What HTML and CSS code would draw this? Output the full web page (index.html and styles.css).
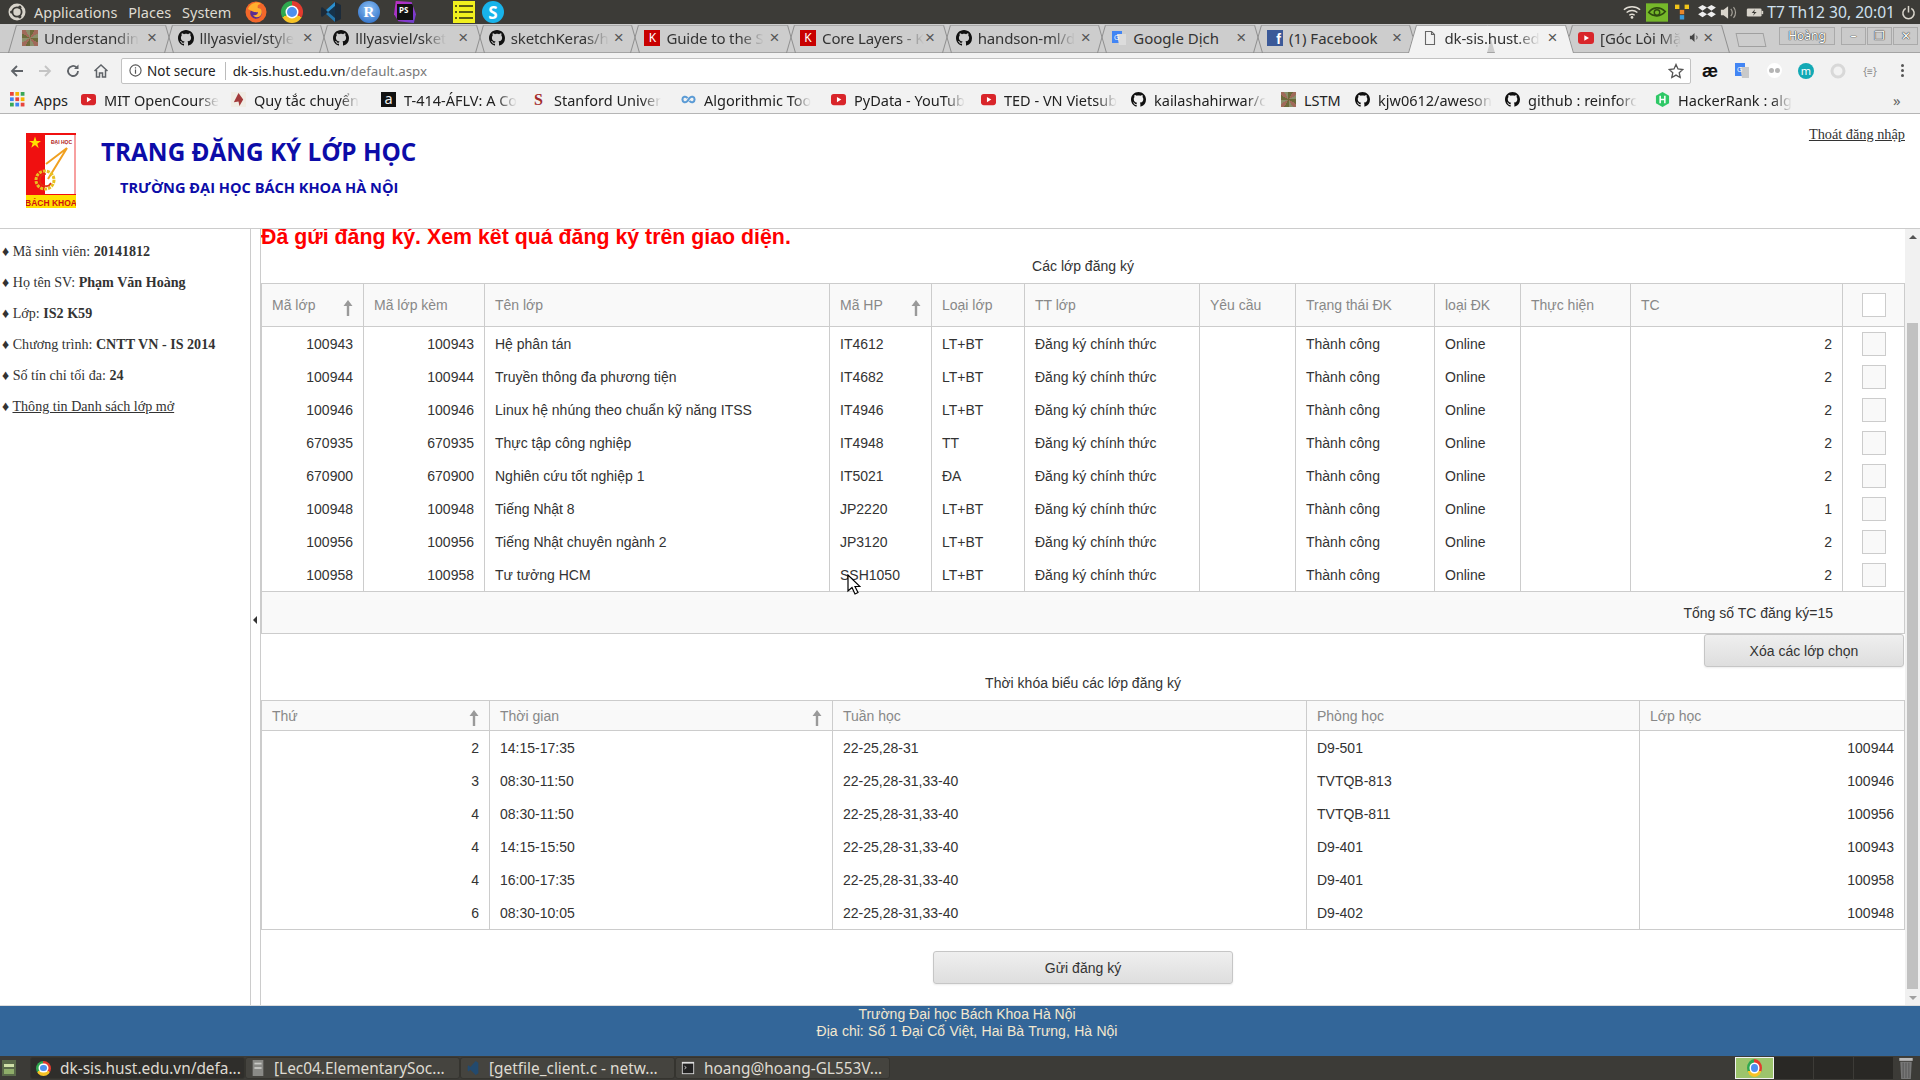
FILE: index.html
```html
<!DOCTYPE html>
<html lang="vi">
<head>
    <meta charset="UTF-8">
    <title>dk-sis.hust.edu.vn/default.aspx</title>
    <link rel="stylesheet" href="styles.css">
</head>
<body>
    <svg class="icon-defs">
        <symbol id="gh" viewBox="0 0 16 16"><path d="M8 0C3.58 0 0 3.58 0 8c0 3.54 2.29 6.53 5.47 7.59.4.07.55-.17.55-.38 0-.19-.01-.82-.01-1.49-2.01.37-2.53-.49-2.69-.94-.09-.23-.48-.94-.82-1.13-.28-.15-.68-.52-.01-.53.63-.01 1.08.58 1.23.82.72 1.21 1.87.87 2.33.66.07-.52.28-.87.51-1.07-1.78-.2-3.64-.89-3.64-3.95 0-.87.31-1.59.82-2.15-.08-.2-.36-1.02.08-2.12 0 0 .67-.21 2.2.82.64-.18 1.32-.27 2-.27s1.36.09 2 .27c1.53-1.04 2.2-.82 2.2-.82.44 1.1.16 1.92.08 2.12.51.56.82 1.27.82 2.15 0 3.07-1.87 3.75-3.65 3.95.29.25.54.73.54 1.48 0 1.07-.01 1.93-.01 2.2 0 .21.15.46.55.38A8.01 8.01 0 0 0 16 8c0-4.42-3.58-8-8-8z"/></symbol>
        <symbol id="yt" viewBox="0 0 16 16"><rect y="2" width="16" height="12" rx="3" fill="#d9252a"/><path d="M6.3 5.2v5.6L11 8z" fill="#fff"/></symbol>
        <symbol id="sortup" viewBox="0 0 10 16"><path d="M5 0l4.5 6H6.2v10H3.8V6H.5z" fill="#9a9a9a"/></symbol>
    </svg>

    <!-- ubuntu top panel -->
    <div class="panel">
        <div class="panel-left">
            <svg class="ubuntu-logo" viewBox="0 0 18 18"><circle cx="9" cy="9" r="8.5" fill="#d8d4cb"/><circle cx="9" cy="9" r="4.6" fill="none" stroke="#3c3b37" stroke-width="1.8"/><circle cx="3.6" cy="9" r="1.6" fill="#3c3b37"/><circle cx="11.8" cy="4.2" r="1.6" fill="#3c3b37"/><circle cx="11.8" cy="13.8" r="1.6" fill="#3c3b37"/></svg>
            <span class="panel-menu">Applications</span>
            <span class="panel-menu">Places</span>
            <span class="panel-menu">System</span>
        </div>
        <div class="launchers">
            <svg class="launcher" viewBox="0 0 22 22"><circle cx="11" cy="11" r="10.5" fill="#f2672a"/><circle cx="11" cy="12" r="5.8" fill="#5a2d91"/><path d="M3 8c2-6 9-8 13-5-3 0-4 2-3 4 3 0 5 3 3 7-2 3-6 3-8 0 3 1 5-1 5-3-3 1-6-1-10-3z" fill="#ffb02e"/></svg>
            <span class="chrome-icon launcher-chrome"></span>
            <svg class="launcher launcher-vscode" viewBox="0 0 22 22"><path d="M15 1l6 3v14l-6 3-9-8-4 3-1-1V7l1-1 4 3z" fill="#1c2b3a"/><path d="M15 5v12l-7-6z" fill="#16324a"/><path d="M15 1l-9 8 2 2 7-6z" fill="#2a8fd0"/><path d="M15 21l-9-8 2-2 7 6z" fill="#2477ae"/></svg>
            <span class="r-icon">R</span>
            <span class="ps-icon"><span class="ps-text">PS</span></span>
            <svg class="launcher launcher-sticky" viewBox="0 0 22 22"><rect width="22" height="22" fill="#f1f01e"/><path d="M2 5h2M6 5h14M2 11h2M6 11h14M2 17h2M6 17h14" stroke="#2a2a10" stroke-width="1.6"/></svg>
            <span class="skype-icon">S</span>
        </div>
        <div class="tray">
            <svg class="tray-wifi" viewBox="0 0 20 16"><path d="M1 5c5-4.500 13-4.500 18 0M4 8c3.500-3 8.500-3 12 0M7 11c2-1.500 4-1.500 6 0" fill="none" stroke="#e3dfd6" stroke-width="1.500"/><circle cx="10" cy="13.500" r="1.500" fill="#e3dfd6"/></svg>
            <svg class="tray-nvidia" viewBox="0 0 24 20"><rect width="24" height="20" fill="#76b82a"/><path d="M3 10c4-6 12-7 18-1-5 6-13 6-18 1z" fill="none" stroke="#2f4a10" stroke-width="1.800"/><circle cx="12" cy="10" r="3" fill="none" stroke="#2f4a10" stroke-width="1.500"/></svg>
            <svg class="tray-yellow" viewBox="0 0 16 18"><rect width="5" height="5" fill="#f0c41a"/><rect x="11" width="5" height="5" fill="#f0c41a"/><rect x="5.500" y="6" width="5" height="5" fill="#e8862a"/><rect x="5.500" y="12" width="5" height="5" fill="#3a9ad9"/></svg>
            <svg class="tray-dropbox" viewBox="0 0 20 18"><path d="M5 1l5 3-5 3.500L0 4zM15 1l5 3-5 3.500L10 4zM5 8.500l5 3-5 3.500-5-3.500zM15 8.500l5 3-5 3.500-5-3.500z" fill="#eee"/></svg>
            <svg class="tray-volume" viewBox="0 0 20 16"><path d="M1 5h3l5-4v14l-5-4H1z" fill="#d8d4cb"/><path d="M12 4c2 2.500 2 5.500 0 8M15 2c3 3.500 3 8.500 0 12" fill="none" stroke="#a8a49c" stroke-width="1.300"/></svg>
            <svg class="tray-battery" viewBox="0 0 22 12"><rect x="1" y="1" width="18" height="10" rx="1.500" fill="#d8d4cb"/><rect x="19" y="4" width="2" height="4" fill="#d8d4cb"/><path d="M11 2L7 6.500h3L8.500 10 13 5.500h-3z" fill="#3c3b37"/></svg>
            <span class="tray-clock">T7 Th12 30, 20:01</span>
            <svg class="tray-power" viewBox="0 0 16 16"><path d="M5 3.500a6 6 0 1 0 6 0" fill="none" stroke="#d8d4cb" stroke-width="1.600"/><path d="M8 1v7" stroke="#d8d4cb" stroke-width="1.600"/></svg>
        </div>
    </div>

    <!-- browser tabs -->
    <div class="tabstrip">
        <div class="tab"><span class="fav fav-photo"></span><span class="tab-title">Understandin</span><span class="tab-close">×</span></div>
        <div class="tab"><svg class="fav"><use href="#gh"/></svg><span class="tab-title">lllyasviel/style</span><span class="tab-close">×</span></div>
        <div class="tab"><svg class="fav"><use href="#gh"/></svg><span class="tab-title">lllyasviel/sket</span><span class="tab-close">×</span></div>
        <div class="tab"><svg class="fav"><use href="#gh"/></svg><span class="tab-title">sketchKeras/h</span><span class="tab-close">×</span></div>
        <div class="tab"><span class="fav fav-k">K</span><span class="tab-title">Guide to the S</span><span class="tab-close">×</span></div>
        <div class="tab"><span class="fav fav-k">K</span><span class="tab-title">Core Layers - K</span><span class="tab-close">×</span></div>
        <div class="tab"><svg class="fav"><use href="#gh"/></svg><span class="tab-title">handson-ml/d</span><span class="tab-close">×</span></div>
        <div class="tab"><svg class="fav fav-translate" viewBox="0 0 16 16"><rect x="1" y="1" width="10" height="12" fill="#4285f4"/><path d="M6 4h9v11H8z" fill="#dcdcdc"/><text x="3" y="10" font-size="7" fill="#fff" font-family="Liberation Sans">G</text></svg><span class="tab-title tab-title-full">Google Dịch</span><span class="tab-close">×</span></div>
        <div class="tab"><span class="fav fav-fb">f</span><span class="tab-title tab-title-full">(1) Facebook</span><span class="tab-close">×</span></div>
        <div class="tab tab-active"><svg class="fav" viewBox="0 0 16 16"><path d="M3.500 1.500h6l3 3v10h-9zM9.500 1.500v3h3" fill="none" stroke="#666" stroke-width="1.100"/></svg><span class="tab-title">dk-sis.hust.ed</span><span class="tab-close">×</span></div>
        <div class="tab"><svg class="fav"><use href="#yt"/></svg><span class="tab-title">[Góc Lòi Mặ</span><svg class="tab-sound" viewBox="0 0 12 12"><path d="M1 4h2l3-3v10L3 8H1z" fill="#444"/><path d="M8 4c1 1.300 1 2.700 0 4" fill="none" stroke="#444"/></svg><span class="tab-close tab-close-near">×</span></div>
        <div class="new-tab"></div>
        <div class="window-controls">
            <span class="profile-btn">Hoàng</span>
            <span class="win-btn">–</span>
            <span class="win-btn">❐</span>
            <span class="win-btn">✕</span>
        </div>
    </div>

    <!-- address bar -->
    <div class="toolbar">
        <div class="nav-buttons">
            <svg class="nav-icon" viewBox="0 0 16 16"><path d="M14 8H3M8 3L3 8l5 5" fill="none" stroke="#5f6368" stroke-width="1.800"/></svg>
            <svg class="nav-icon" viewBox="0 0 16 16"><path d="M2 8h11M8 3l5 5-5 5" fill="none" stroke="#c4c4c4" stroke-width="1.800"/></svg>
            <svg class="nav-icon" viewBox="0 0 16 16"><path d="M13 8a5 5 0 1 1-1.500-3.600" fill="none" stroke="#5f6368" stroke-width="1.800"/><path d="M13.500 1.500v4.500H9z" fill="#5f6368"/></svg>
            <svg class="nav-icon" viewBox="0 0 16 16"><path d="M1.500 8L8 2l6.500 6M3.500 7v7h3v-4h3v4h3V7" fill="none" stroke="#5f6368" stroke-width="1.500"/></svg>
        </div>
        <div class="omnibox">
            <svg class="info-icon" viewBox="0 0 14 14"><circle cx="7" cy="7" r="6" fill="none" stroke="#555" stroke-width="1.200"/><path d="M7 6v4.500M7 3.500v1.300" stroke="#555" stroke-width="1.300"/></svg>
            <span class="omni-secure">Not secure</span>
            <span class="omni-sep"></span>
            <span class="omni-url">dk-sis.hust.edu.vn<span class="omni-path">/default.aspx</span></span>
            <svg class="star-icon" viewBox="0 0 16 16"><path d="M8 1.500l2 4.500 4.800.5-3.600 3.200 1 4.800L8 12.100l-4.200 2.400 1-4.800L1.200 6.500 6 6z" fill="none" stroke="#555" stroke-width="1.300"/></svg>
        </div>
        <div class="extensions">
            <span class="ext-ae">æ</span>
            <svg class="ext" viewBox="0 0 16 16"><rect x="1" y="0" width="10" height="13" fill="#4285f4"/><path d="M6 4h9v11H8z" fill="#c9c9c9"/><text x="3" y="9" font-size="7" fill="#fff" font-family="Liberation Sans">G</text></svg>
            <span class="ext-dots"><span class="ext-dot"></span><span class="ext-dot"></span></span>
            <span class="ext-m">m</span>
            <svg class="ext" viewBox="0 0 16 16"><circle cx="8" cy="8" r="6" fill="none" stroke="#d8d8d8" stroke-width="3"/></svg>
            <span class="ext-json">{≡}</span>
            <span class="ext-menu"><span class="ext-menu-dot"></span><span class="ext-menu-dot"></span><span class="ext-menu-dot"></span></span>
        </div>
    </div>

    <!-- bookmarks -->
    <div class="bookmarks">
        <div class="bm-apps">
            <svg class="bm-icon" viewBox="0 0 14 14"><g><rect width="3.500" height="3.500" fill="#e8453c"/><rect x="5" width="3.500" height="3.500" fill="#f5b400"/><rect x="10" width="3.500" height="3.500" fill="#3aa757"/><rect y="5" width="3.500" height="3.500" fill="#4285f4"/><rect x="5" y="5" width="3.500" height="3.500" fill="#e8453c"/><rect x="10" y="5" width="3.500" height="3.500" fill="#f5b400"/><rect y="10" width="3.500" height="3.500" fill="#3aa757"/><rect x="5" y="10" width="3.500" height="3.500" fill="#4285f4"/><rect x="10" y="10" width="3.500" height="3.500" fill="#e8453c"/></g></svg>
            <span>Apps</span>
        </div>
        <div class="bm"><svg class="bm-icon"><use href="#yt"/></svg><span class="bm-text">MIT OpenCourse</span></div>
        <div class="bm"><svg class="bm-icon" viewBox="0 0 16 16"><rect width="16" height="16" fill="#f0ece4"/><path d="M8 1l5 7-4 7-1-5-5 1z" fill="#a33a3a"/></svg><span class="bm-text">Quy tắc chuyển</span></div>
        <div class="bm"><span class="bm-icon bm-a">a</span><span class="bm-text">T-414-ÁFLV: A Co</span></div>
        <div class="bm"><span class="bm-icon bm-s">S</span><span class="bm-text">Stanford Univer</span></div>
        <div class="bm"><svg class="bm-icon" viewBox="0 0 16 16"><path d="M7 6.500C5 4 1.500 5 1.500 8s3.500 4 5.500 1.500l2-3C11 4 14.500 5 14.500 8S11 12 9 9.500" fill="none" stroke="#5b9bd5" stroke-width="2.200"/></svg><span class="bm-text">Algorithmic Too</span></div>
        <div class="bm"><svg class="bm-icon"><use href="#yt"/></svg><span class="bm-text">PyData - YouTub</span></div>
        <div class="bm"><svg class="bm-icon"><use href="#yt"/></svg><span class="bm-text">TED - VN Vietsub</span></div>
        <div class="bm"><svg class="bm-icon"><use href="#gh"/></svg><span class="bm-text">kailashahirwar/c</span></div>
        <div class="bm bm-short"><span class="fav fav-photo bm-icon"></span><span>LSTM</span></div>
        <div class="bm"><svg class="bm-icon"><use href="#gh"/></svg><span class="bm-text">kjw0612/aweson</span></div>
        <div class="bm"><svg class="bm-icon"><use href="#gh"/></svg><span class="bm-text">github : reinforc</span></div>
        <div class="bm"><svg class="bm-icon" viewBox="0 0 16 16"><path d="M8 0l7 4v8l-7 4-7-4V4z" fill="#2ec866"/><path d="M5.500 4v8M10.500 4v8M5.500 8h5" stroke="#fff" stroke-width="1.600"/></svg><span class="bm-text">HackerRank : alg</span></div>
        <span class="bm-more">»</span>
    </div>

    <!-- page -->
    <header class="site-header">
        <svg class="school-logo" viewBox="0 0 50 75">
            <rect width="50" height="75" fill="#f01010"/>
            <rect x="19" y="2" width="29" height="59" fill="#fff"/>
            <rect x="48" y="2" width="2" height="59" fill="#f7a0a0"/>
            <path d="M9 3.500l1.500 4.500h4.500l-3.700 2.700 1.400 4.500L9 12l-3.700 2.700 1.400-4.500L3 8h4.500z" fill="#ffe000"/>
            <text class="logo-top" x="25" y="10.500">ĐẠI HỌC</text>
            <path d="M41 15L20 31M41 15L22 46" stroke="#f0a020" stroke-width="2" fill="none"/>
            <circle cx="19" cy="47" r="9" fill="none" stroke="#e8c020" stroke-width="3" stroke-dasharray="3 1"/>
            <path d="M20 41a6 6 0 1 0 5 9" fill="none" stroke="#e03010" stroke-width="1.500"/>
            <rect y="61" width="50" height="14" fill="#ffe000"/>
            <rect x="0" y="61" width="50" height="1" fill="#f01010"/>
            <text class="logo-bottom" x="25" y="72.500">BÁCH KHOA</text>
        </svg>
        <div class="site-titles">
            <div class="site-title">TRANG ĐĂNG KÝ LỚP HỌC</div>
            <div class="site-subtitle">TRƯỜNG ĐẠI HỌC BÁCH KHOA HÀ NỘI</div>
        </div>
        <a class="logout" href="#">Thoát đăng nhập</a>
    </header>

    <div class="site-body">
        <aside class="sidebar">
            <div class="side-line">♦ Mã sinh viên: <b>20141812</b></div>
            <div class="side-line">♦ Họ tên SV: <b>Phạm Văn Hoàng</b></div>
            <div class="side-line">♦ Lớp: <b>IS2 K59</b></div>
            <div class="side-line">♦ Chương trình: <b>CNTT VN - IS 2014</b></div>
            <div class="side-line">♦ Số tín chỉ tối đa: <b>24</b></div>
            <div class="side-line">♦ <a href="#">Thông tin Danh sách lớp mở</a></div>
        </aside>
        <div class="splitter"><span class="splitter-arrow"></span></div>

        <main class="content">
            <div class="message">Đã gửi đăng ký. Xem kết quả đăng ký trên giao diện.</div>
            <div class="section-title">Các lớp đăng ký</div>

            <table class="grid grid-classes">
                <colgroup>
                    <col class="c102"><col class="c121"><col class="c345"><col class="c102"><col class="c93"><col class="c175">
                    <col class="c96"><col class="c139"><col class="c86"><col class="c110"><col class="c212"><col class="c62">
                </colgroup>
                <thead>
                    <tr>
                        <th><span class="th-sort">Mã lớp <svg class="sort-arrow"><use href="#sortup"/></svg></span></th>
                        <th>Mã lớp kèm</th>
                        <th>Tên lớp</th>
                        <th><span class="th-sort">Mã HP <svg class="sort-arrow"><use href="#sortup"/></svg></span></th>
                        <th>Loại lớp</th>
                        <th>TT lớp</th>
                        <th>Yêu cầu</th>
                        <th>Trạng thái ĐK</th>
                        <th>loại ĐK</th>
                        <th>Thực hiện</th>
                        <th>TC</th>
                        <th class="cell-check"><span class="check check-head"></span></th>
                    </tr>
                </thead>
                <tbody>
                    <tr><td class="num">100943</td><td class="num">100943</td><td>Hệ phân tán</td><td>IT4612</td><td>LT+BT</td><td>Đăng ký chính thức</td><td></td><td>Thành công</td><td>Online</td><td></td><td class="num">2</td><td class="cell-check"><span class="check"></span></td></tr>
                    <tr><td class="num">100944</td><td class="num">100944</td><td>Truyền thông đa phương tiện</td><td>IT4682</td><td>LT+BT</td><td>Đăng ký chính thức</td><td></td><td>Thành công</td><td>Online</td><td></td><td class="num">2</td><td class="cell-check"><span class="check"></span></td></tr>
                    <tr><td class="num">100946</td><td class="num">100946</td><td>Linux hệ nhúng theo chuẩn kỹ năng ITSS</td><td>IT4946</td><td>LT+BT</td><td>Đăng ký chính thức</td><td></td><td>Thành công</td><td>Online</td><td></td><td class="num">2</td><td class="cell-check"><span class="check"></span></td></tr>
                    <tr><td class="num">670935</td><td class="num">670935</td><td>Thực tập công nghiệp</td><td>IT4948</td><td>TT</td><td>Đăng ký chính thức</td><td></td><td>Thành công</td><td>Online</td><td></td><td class="num">2</td><td class="cell-check"><span class="check"></span></td></tr>
                    <tr><td class="num">670900</td><td class="num">670900</td><td>Nghiên cứu tốt nghiệp 1</td><td>IT5021</td><td>ĐA</td><td>Đăng ký chính thức</td><td></td><td>Thành công</td><td>Online</td><td></td><td class="num">2</td><td class="cell-check"><span class="check"></span></td></tr>
                    <tr><td class="num">100948</td><td class="num">100948</td><td>Tiếng Nhật 8</td><td>JP2220</td><td>LT+BT</td><td>Đăng ký chính thức</td><td></td><td>Thành công</td><td>Online</td><td></td><td class="num">1</td><td class="cell-check"><span class="check"></span></td></tr>
                    <tr><td class="num">100956</td><td class="num">100956</td><td>Tiếng Nhật chuyên ngành 2</td><td>JP3120</td><td>LT+BT</td><td>Đăng ký chính thức</td><td></td><td>Thành công</td><td>Online</td><td></td><td class="num">2</td><td class="cell-check"><span class="check"></span></td></tr>
                    <tr><td class="num">100958</td><td class="num">100958</td><td>Tư tưởng HCM</td><td>SSH1050</td><td>LT+BT</td><td>Đăng ký chính thức</td><td></td><td>Thành công</td><td>Online</td><td></td><td class="num">2</td><td class="cell-check"><span class="check"></span></td></tr>
                </tbody>
                <tfoot>
                    <tr><td colspan="12" class="grid-total">Tổng số TC đăng ký=15</td></tr>
                </tfoot>
            </table>

            <div class="delete-row"><button class="btn btn-delete">Xóa các lớp chọn</button></div>

            <div class="section-title section-title-second">Thời khóa biểu các lớp đăng ký</div>

            <table class="grid grid-schedule">
                <colgroup>
                    <col class="c228"><col class="c343"><col class="c474"><col class="c333"><col class="c265">
                </colgroup>
                <thead>
                    <tr>
                        <th><span class="th-sort">Thứ <svg class="sort-arrow"><use href="#sortup"/></svg></span></th>
                        <th><span class="th-sort">Thời gian <svg class="sort-arrow"><use href="#sortup"/></svg></span></th>
                        <th>Tuần học</th>
                        <th>Phòng học</th>
                        <th>Lớp học</th>
                    </tr>
                </thead>
                <tbody>
                    <tr><td class="num">2</td><td>14:15-17:35</td><td>22-25,28-31</td><td>D9-501</td><td class="num">100944</td></tr>
                    <tr><td class="num">3</td><td>08:30-11:50</td><td>22-25,28-31,33-40</td><td>TVTQB-813</td><td class="num">100946</td></tr>
                    <tr><td class="num">4</td><td>08:30-11:50</td><td>22-25,28-31,33-40</td><td>TVTQB-811</td><td class="num">100956</td></tr>
                    <tr><td class="num">4</td><td>14:15-15:50</td><td>22-25,28-31,33-40</td><td>D9-401</td><td class="num">100943</td></tr>
                    <tr><td class="num">4</td><td>16:00-17:35</td><td>22-25,28-31,33-40</td><td>D9-401</td><td class="num">100958</td></tr>
                    <tr><td class="num">6</td><td>08:30-10:05</td><td>22-25,28-31,33-40</td><td>D9-402</td><td class="num">100948</td></tr>
                </tbody>
            </table>

            <div class="submit-row"><button class="btn btn-submit">Gửi đăng ký</button></div>
        </main>

        <div class="scrollbar">
            <span class="scroll-up"></span>
            <span class="scroll-thumb"></span>
            <span class="scroll-down"></span>
        </div>
    </div>

    <footer class="site-footer">
        <div>Trường Đại học Bách Khoa Hà Nội</div>
        <div class="footer-address">Địa chỉ: Số 1 Đại Cổ Việt, Hai Bà Trưng, Hà Nội</div>
    </footer>

    <!-- ubuntu bottom panel -->
    <div class="taskbar">
        <svg class="show-desktop" viewBox="0 0 16 18"><rect x="1" y="1" width="14" height="16" fill="#5a6a4a"/><rect x="3" y="5" width="10" height="3" fill="#cfe0a8"/><rect x="3" y="10" width="10" height="5" fill="#8fae6a"/></svg>
        <div class="task task-active"><span class="chrome-icon task-chrome"></span><span class="task-label">dk-sis.hust.edu.vn/defa...</span></div>
        <div class="task"><svg class="task-icon" viewBox="0 0 14 18"><rect x="1" y="0" width="12" height="18" fill="#8a8a86"/><rect x="3" y="3" width="8" height="2" fill="#c8c8c4"/><rect x="3" y="8" width="8" height="2" fill="#c8c8c4"/></svg><span class="task-label">[Lec04.ElementarySoc...</span></div>
        <div class="task"><svg class="task-icon" viewBox="0 0 14 18"><path d="M10 1l3 2v12l-3 2-6-6-2 2-1-1V7l1-1 2 2z" fill="#234a6e"/></svg><span class="task-label">[getfile_client.c - netw...</span></div>
        <div class="task"><svg class="task-icon" viewBox="0 0 16 16"><rect x="1" y="1" width="14" height="14" fill="#ddd"/><rect x="2" y="3" width="12" height="11" fill="#222"/><path d="M4 6l2 1.500L4 9" fill="none" stroke="#ddd"/></svg><span class="task-label">hoang@hoang-GL553V...</span></div>
        <div class="task-tail">
            <div class="workspace workspace-current"><span class="chrome-icon workspace-chrome"></span></div>
            <div class="workspace"></div>
            <div class="workspace"></div>
            <div class="workspace"></div>
            <svg class="trash" viewBox="0 0 18 24"><rect x="2" y="1" width="14" height="3" fill="#bbb"/><path d="M3 5h12l-1 18H4z" fill="#777"/><path d="M6 6v16M9 6v16M12 6v16" stroke="#555"/></svg>
        </div>
    </div>

    <svg class="mouse-cursor" viewBox="0 0 14 22"><path d="M1 1v16l4-3.500 3 6.500 3-1.500-3-6h5z" fill="#fff" stroke="#000" stroke-width="1.200"/></svg>
</body>
</html>
```

FILE: styles.css
```css
html, body {
    margin: 0;
    padding: 0;
    height: 100%;
}

body {
    display: flex;
    flex-direction: column;
    height: 100vh;
    overflow: hidden;
    position: relative;
    background: #fff;
    font-family: 'Liberation Sans', Arial, sans-serif;
    font-size: 14px;
    color: #333;
}

.icon-defs {
    display: none;
}

/* top panel */
.panel {
    display: flex;
    align-items: center;
    flex: none;
    height: 24px;
    background: #3c3b37;
    color: #dfdbd2;
    font-family: 'Noto Sans', sans-serif;
    font-size: 14.500px;
}

.panel-left {
    display: flex;
    align-items: center;
    flex: none;
    width: 245px;
}

.ubuntu-logo {
    flex: none;
    width: 18px;
    height: 18px;
    margin: 0 8px;
}

.panel-menu {
    margin-right: 11px;
}

.launchers {
    display: flex;
    align-items: center;
}

.launcher {
    width: 22px;
    height: 22px;
}

.launcher-vscode {
    margin-left: 17px;
}

.launcher-sticky {
    margin-left: 37px;
}

.chrome-icon {
    display: inline-block;
    position: relative;
    border-radius: 50%;
    background: conic-gradient(#e33b2e 0 120deg, #f7c325 120deg 240deg, #2fa84f 240deg 360deg);
    flex: none;
}

.chrome-icon::after {
    content: "";
    position: absolute;
    inset: 27%;
    border-radius: 50%;
    background: #4d8fef;
    box-shadow: 0 0 0 1.500px #fff;
}

.launcher-chrome {
    width: 22px;
    height: 22px;
    margin-left: 14px;
}

.r-icon {
    display: flex;
    align-items: center;
    justify-content: center;
    width: 22px;
    height: 22px;
    margin-left: 16px;
    border-radius: 50%;
    background: radial-gradient(circle at 50% 35%, #8fc3f5, #1f62c0);
    color: #fff;
    font-family: 'Liberation Serif', serif;
    font-weight: bold;
    font-size: 15px;
}

.ps-icon {
    display: block;
    width: 22px;
    height: 22px;
    margin-left: 14px;
    background: linear-gradient(135deg, #c22ec4, #6a3fd0);
    clip-path: polygon(8% 0, 80% 4%, 100% 60%, 90% 100%, 20% 92%, 0 60%);
}

.ps-text {
    display: block;
    margin: 3px;
    height: 16px;
    background: #111;
    color: #fff;
    font-size: 8px;
    font-weight: bold;
    line-height: 11px;
    padding-left: 2px;
}

.skype-icon {
    display: flex;
    align-items: center;
    justify-content: center;
    width: 22px;
    height: 22px;
    margin-left: 7px;
    border-radius: 50%;
    background: #18b3ea;
    color: #fff;
    font-weight: bold;
    font-size: 17px;
}

.tray {
    display: flex;
    align-items: center;
    margin-left: auto;
    padding-right: 4px;
}

.tray-wifi {
    width: 18px;
    height: 15px;
    margin-right: 5px;
}

.tray-nvidia {
    width: 22px;
    height: 19px;
    margin-right: 7px;
}

.tray-yellow {
    width: 14px;
    height: 17px;
    margin-right: 9px;
}

.tray-dropbox {
    width: 18px;
    height: 16px;
    margin-right: 4px;
}

.tray-volume {
    width: 18px;
    height: 15px;
    margin-right: 8px;
}

.tray-battery {
    width: 18px;
    height: 11px;
    margin-right: 3px;
}

.tray-clock {
    font-size: 15.600px;
    white-space: nowrap;
    color: #cfe0ef;
}

.tray-power {
    width: 15px;
    height: 15px;
    margin-left: 6px;
}

/* tabs */
.tabstrip {
    display: flex;
    flex: none;
    height: 28px;
    padding-left: 8px;
    background: #cdcdcd;
    border-bottom: 1px solid #a4a4a4;
    font-family: 'Noto Sans', sans-serif;
    font-size: 15px;
    color: #333;
}

.tab {
    display: flex;
    align-items: center;
    position: relative;
    z-index: 0;
    flex: none;
    box-sizing: border-box;
    width: 165px;
    height: 29px;
    margin-right: -9.400px;
    padding: 0 15px 2px 14px;
}

.tab::before,
.tab::after {
    content: "";
    position: absolute;
    top: 1px;
    bottom: 0;
    z-index: -1;
    border-top: 1px solid #a9a9a9;
}

.tab::before {
    left: 4px;
    right: 50%;
    border-left: 1px solid #8f8f8f;
    transform: skewX(-16deg);
}

.tab::after {
    right: 4px;
    left: 50%;
    border-right: 1px solid #8f8f8f;
    transform: skewX(16deg);
}

.tab-active {
    z-index: 2;
}

.tab-active::before,
.tab-active::after {
    background: #f2f2f2;
}

.fav {
    display: block;
    flex: none;
    width: 16px;
    height: 16px;
    fill: #111;
}

.fav-photo {
    background: repeating-conic-gradient(#6d6a3a 0 30deg, #a06a5a 30deg 60deg, #8a8f6a 60deg 90deg);
}

.fav-k {
    background: #c80000;
    color: #fff;
    font-size: 12px;
    line-height: 16px;
    text-align: center;
}

.fav-fb {
    background: #3b5998;
    color: #fff;
    font-family: 'Liberation Sans', sans-serif;
    font-weight: bold;
    font-size: 14px;
    line-height: 18px;
    text-align: right;
    padding-right: 2px;
    box-sizing: border-box;
}

.tab-title {
    flex: 0 1 auto;
    min-width: 0;
    margin-left: 6px;
    overflow: hidden;
    white-space: nowrap;
    letter-spacing: -0.150px;
    -webkit-mask-image: linear-gradient(90deg, #000 75%, transparent 100%);
    mask-image: linear-gradient(90deg, #000 75%, transparent 100%);
}

.tab-title-full {
    letter-spacing: 0;
    -webkit-mask-image: none;
    mask-image: none;
}

.tab-sound {
    width: 11px;
    height: 11px;
    margin-left: auto;
    flex: none;
}

.tab-close {
    flex: none;
    width: 12px;
    margin-left: auto;
    text-align: center;
    font-family: 'Liberation Sans', sans-serif;
    font-size: 17px;
    color: #555;
}

.tab-close-near {
    margin-left: 2px;
}

.new-tab {
    flex: none;
    width: 26px;
    height: 12px;
    margin: 9px 0 0 17px;
    border: 1px solid #a0a0a0;
    transform: skewX(12deg);
}

.window-controls {
    display: flex;
    align-items: flex-start;
    gap: 1px;
    margin-left: auto;
    padding: 3px 2px 0 0;
}

.profile-btn,
.win-btn {
    display: block;
    box-sizing: border-box;
    height: 18px;
    border: 1px solid #aaa;
    background: #cacaca;
    color: #fff;
    text-align: center;
    line-height: 15px;
    font-size: 12px;
    text-shadow: 0 0 1px #111, 0 0 1px #111;
}

.profile-btn {
    width: 56px;
    margin-right: 5px;
}

.win-btn {
    width: 25px;
}

/* address bar */
.toolbar {
    display: flex;
    align-items: center;
    flex: none;
    height: 35px;
    background: #f2f2f2;
    font-family: 'Noto Sans', sans-serif;
}

.nav-buttons {
    display: flex;
    align-items: center;
    gap: 12px;
    width: 121px;
    padding-left: 9px;
    box-sizing: border-box;
    flex: none;
}

.nav-icon {
    width: 16px;
    height: 16px;
}

.omnibox {
    display: flex;
    align-items: center;
    flex: none;
    box-sizing: border-box;
    width: 1570px;
    height: 26px;
    padding: 0 6px 0 7px;
    background: #fff;
    border: 1px solid #c2c2c2;
    border-radius: 2px;
    font-size: 13.500px;
    color: #222;
}

.info-icon {
    width: 13px;
    height: 13px;
    margin-right: 5px;
}

.omni-sep {
    width: 1px;
    height: 18px;
    margin: 0 7px 0 9px;
    background: #bbb;
}

.omni-url {
    font-size: 13.300px;
}

.omni-path {
    color: #777;
}

.star-icon {
    width: 16px;
    height: 16px;
    margin-left: auto;
}

.extensions {
    display: grid;
    grid-template-columns: repeat(7, 32px);
    align-items: center;
    justify-items: center;
    padding-left: 3px;
}

.ext {
    width: 16px;
    height: 16px;
}

.ext-ae {
    font-family: 'Liberation Sans', sans-serif;
    font-weight: bold;
    font-size: 18px;
    line-height: 16px;
    color: #111;
}

.ext-dots {
    display: flex;
    gap: 1px;
    padding: 5px 2px;
    background: #fff;
    border-radius: 8px;
}

.ext-dot {
    width: 5px;
    height: 5px;
    border-radius: 50%;
    background: #b5b5b5;
}

.ext-m {
    width: 16px;
    height: 16px;
    border-radius: 50%;
    background: #12a9b5;
    color: #fff;
    text-align: center;
    font-size: 11px;
    line-height: 15px;
}

.ext-json {
    font-size: 10px;
    color: #888;
}

.ext-menu {
    display: flex;
    flex-direction: column;
    gap: 2px;
}

.ext-menu-dot {
    width: 3px;
    height: 3px;
    border-radius: 50%;
    background: #555;
}

/* bookmarks */
.bookmarks {
    display: flex;
    align-items: center;
    flex: none;
    height: 23px;
    padding: 0 0 2px 10px;
    background: #f2f2f2;
    border-bottom: 1px solid #b5b5b5;
    font-family: 'Noto Sans', sans-serif;
    font-size: 14.500px;
    color: #222;
}

.bm-apps {
    display: flex;
    align-items: center;
    gap: 9px;
    width: 71px;
    flex: none;
}

.bm {
    display: flex;
    align-items: center;
    gap: 8px;
    width: 150px;
    flex: none;
    overflow: hidden;
}

.bm-short {
    width: 74px;
}

.bm-icon {
    display: block;
    flex: none;
    width: 15px;
    height: 15px;
    fill: #111;
}

.bm-a {
    background: #111;
    color: #eee;
    text-align: center;
    line-height: 13px;
}

.bm-s {
    color: #a32a2a;
    font-family: 'Liberation Serif', serif;
    font-weight: bold;
    font-size: 16px;
    line-height: 15px;
    text-align: center;
}

.bm-text {
    flex: 0 1 auto;
    min-width: 0;
    margin-right: 11px;
    overflow: hidden;
    white-space: nowrap;
    -webkit-mask-image: linear-gradient(90deg, #000 82%, transparent 100%);
    mask-image: linear-gradient(90deg, #000 82%, transparent 100%);
}

.bm-more {
    margin-left: 88px;
    color: #666;
    font-size: 15px;
}

/* site */
.site-header {
    display: flex;
    flex: none;
    box-sizing: border-box;
    height: 115px;
    border-bottom: 1px solid #ccc;
}

.school-logo {
    flex: none;
    width: 50px;
    height: 75px;
    margin: 19px 0 0 26px;
}

.logo-top {
    font-family: 'Liberation Sans', sans-serif;
    font-size: 5px;
    font-weight: bold;
    fill: #b02020;
}

.logo-bottom {
    font-family: 'Liberation Sans', sans-serif;
    font-size: 8.500px;
    font-weight: bold;
    fill: #d01010;
    text-anchor: middle;
}

.site-titles {
    margin-left: 25px;
    font-family: 'Open Sans', sans-serif;
    font-weight: bold;
    color: #0c0ca8;
}

.site-title {
    margin-top: 20px;
    font-size: 24.300px;
    line-height: 36px;
    white-space: nowrap;
}

.site-subtitle {
    margin: 7px 0 0 19px;
    font-size: 14.600px;
    line-height: 20px;
    white-space: nowrap;
}

.logout {
    margin: 12px 15px 0 auto;
    font-family: 'Liberation Serif', serif;
    font-size: 14.300px;
    line-height: 16px;
    color: #333;
}

.site-body {
    display: flex;
    flex: 1;
    min-height: 0;
}

.sidebar {
    flex: none;
    box-sizing: border-box;
    width: 251px;
    padding: 7px 0 0 2px;
    border-right: 1px solid #ccc;
    font-family: 'Liberation Serif', serif;
    font-size: 14.100px;
}

.side-line {
    line-height: 31px;
    white-space: nowrap;
}

.sidebar a {
    color: #333;
}

.splitter {
    display: flex;
    align-items: center;
    flex: none;
    width: 10px;
    border-right: 1px solid #ccc;
    padding-left: 2px;
    box-sizing: border-box;
}

.splitter-arrow {
    margin-top: 6px;
    border-style: solid;
    border-width: 4px 4px 4px 0;
    border-color: transparent #333 transparent transparent;
}

.content {
    flex: none;
    width: 1644px;
    overflow: hidden;
}

.message {
    margin-top: -4px;
    font-weight: bold;
    font-size: 21.330px;
    line-height: 24px;
    color: #f00;
    white-space: nowrap;
}

.section-title {
    margin: 7px 0 7px;
    text-align: center;
    line-height: 20px;
}

.section-title-second {
    margin-top: 6px;
}

.grid {
    table-layout: fixed;
    border-collapse: collapse;
    width: 1643px;
    border: 1px solid #ccc;
}

.c62 { width: 62px; }
.c86 { width: 86px; }
.c93 { width: 93px; }
.c96 { width: 96px; }
.c102 { width: 102px; }
.c110 { width: 110px; }
.c121 { width: 121px; }
.c139 { width: 139px; }
.c175 { width: 175px; }
.c212 { width: 212px; }
.c228 { width: 228px; }
.c265 { width: 265px; }
.c333 { width: 333px; }
.c343 { width: 343px; }
.c345 { width: 345px; }
.c474 { width: 474px; }

.grid th {
    height: 42px;
    padding: 0 10px;
    background: #f9f9f9;
    border: 1px solid #ccc;
    font-weight: normal;
    text-align: left;
    color: #888;
}

.grid-schedule th {
    height: 29px;
}

.grid td {
    height: 33px;
    padding: 0 10px;
    border-left: 1px solid #ccc;
    border-right: 1px solid #ccc;
    white-space: nowrap;
}

.grid td.num {
    text-align: right;
}

.th-sort {
    display: flex;
    align-items: center;
    justify-content: space-between;
}

.sort-arrow {
    width: 10px;
    height: 16px;
    margin-top: 5px;
}

.grid .cell-check {
    padding: 0;
    text-align: center;
}

.check {
    display: block;
    box-sizing: border-box;
    width: 24px;
    height: 24px;
    margin: 0 auto;
    background: #f9f9f9;
    border: 1px solid #ccc;
}

.check-head {
    background: #fff;
}

.grid .grid-total {
    height: 41px;
    padding-right: 71px;
    background: #f9f9f9;
    border-top: 1px solid #ccc;
    text-align: right;
}

.delete-row {
    display: flex;
    justify-content: flex-end;
    padding-right: 1px;
}

.btn {
    display: block;
    height: 33px;
    padding: 0;
    background: linear-gradient(#efefef, #dedede);
    border: 1px solid #c6c6c6;
    border-radius: 3px;
    box-shadow: 0 1px 2px rgba(0, 0, 0, 0.08);
    font-family: 'Liberation Sans', sans-serif;
    font-size: 14px;
    color: #333;
}

.btn-delete {
    width: 200px;
}

.btn-submit {
    width: 300px;
    margin: 0 auto;
}

.submit-row {
    padding-top: 21px;
}

.scrollbar {
    display: flex;
    flex-direction: column;
    align-items: center;
    flex: none;
    width: 15px;
    background: #f1f1f1;
}

.scroll-up {
    margin-top: 6px;
    border-style: solid;
    border-width: 0 4px 4px;
    border-color: transparent transparent #555;
}

.scroll-thumb {
    width: 11px;
    flex: 1;
    margin: 84px 0 7px;
    background: #c1c1c1;
}

.scroll-down {
    margin-bottom: 5px;
    border-style: solid;
    border-width: 4px 4px 0;
    border-color: #a0a0a0 transparent transparent;
}

.site-footer {
    flex: none;
    box-sizing: border-box;
    height: 51px;
    padding: 0 0 0 14px;
    background: #336699;
    border-top: 1px solid #ddd;
    color: #f3e8cf;
    text-align: center;
    line-height: 17px;
}

.footer-address {
    word-spacing: 0.500px;
}

/* bottom panel */
.taskbar {
    display: flex;
    align-items: center;
    flex: none;
    height: 24px;
    background: #3c3b37;
    color: #dfdbd2;
    font-family: 'Noto Sans', sans-serif;
    font-size: 15.400px;
}

.show-desktop {
    flex: none;
    width: 16px;
    height: 18px;
    margin: 0 13px 0 1px;
}

.task {
    display: flex;
    align-items: center;
    flex: none;
    box-sizing: border-box;
    width: 215px;
    height: 22px;
    padding-left: 5px;
    border-radius: 3px;
    background: #45443f;
    border: 1px solid #35342f;
}

.task-active {
    background: #2f2e2b;
}

.task-chrome {
    width: 15px;
    height: 15px;
}

.task-icon {
    flex: none;
    width: 14px;
    height: 16px;
}

.task-label {
    margin-left: 9px;
    white-space: nowrap;
}

.task-tail {
    display: flex;
    align-items: center;
    margin-left: auto;
    padding-right: 5px;
}

.workspace {
    display: flex;
    align-items: center;
    justify-content: center;
    width: 39px;
    height: 22px;
    background: #292825;
    border-right: 1px solid #3c3b37;
}

.workspace-current {
    background: #9cc46c;
    border: 1px solid #f2f2f2;
    box-sizing: border-box;
}

.workspace-chrome {
    width: 15px;
    height: 18px;
}

.trash {
    width: 18px;
    height: 23px;
    margin-left: 3px;
}

/* mouse pointer lies over the page */
.mouse-cursor {
    position: absolute;
    left: 847px;
    top: 574px;
    width: 14px;
    height: 22px;
}
```
